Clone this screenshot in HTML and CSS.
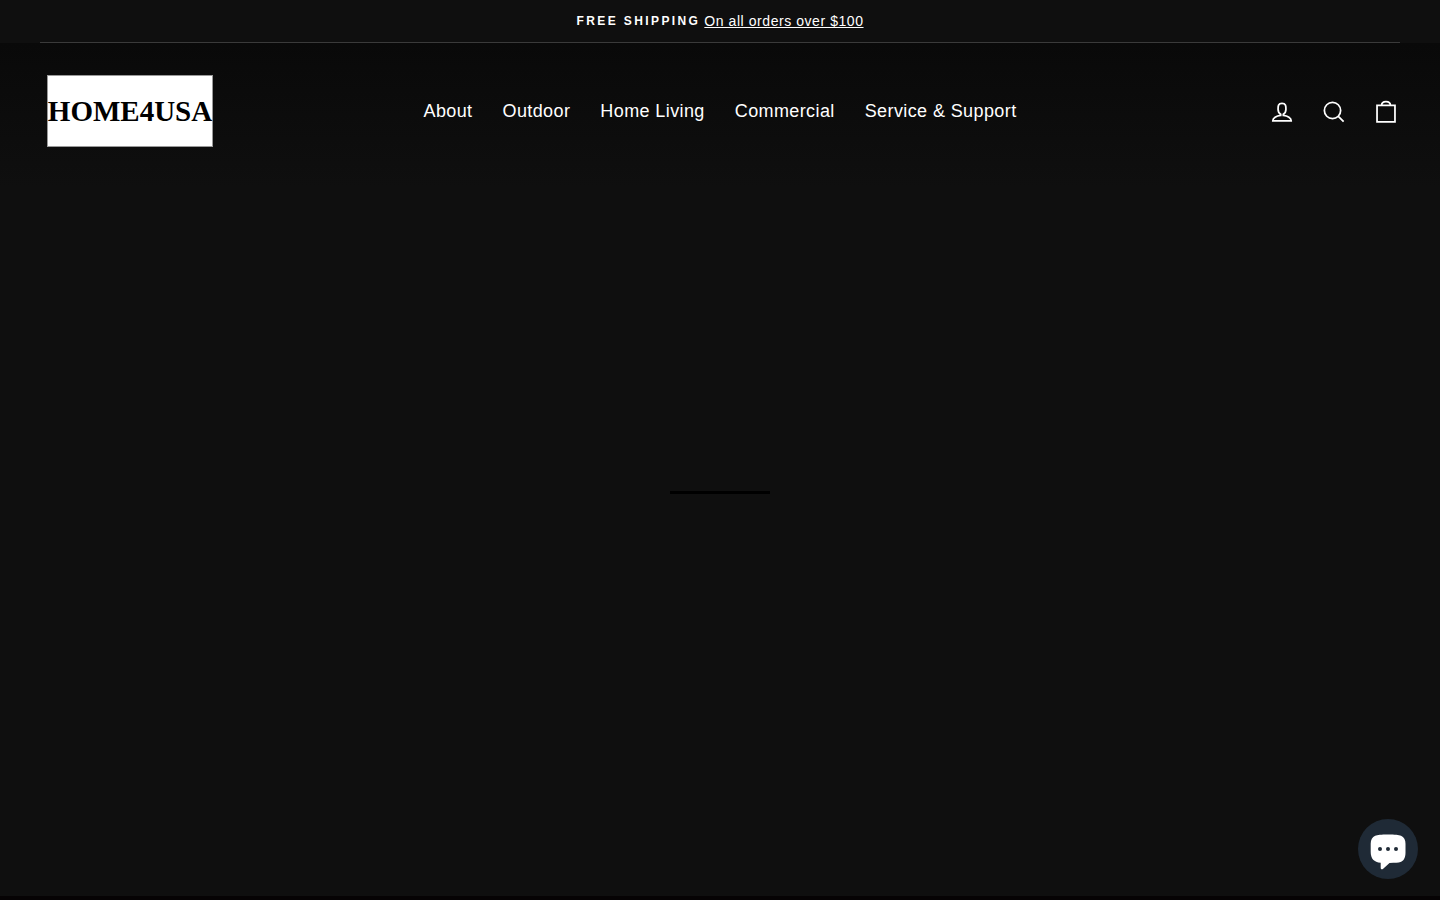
FILE: index.html
```
<!DOCTYPE html>
<html lang="en">

<head>
    <meta charset="UTF-8">
    <meta name="viewport" content="width=device-width, initial-scale=1.0">
    <title>HOME4USA</title>
    <link rel="stylesheet" href="styles.css">
</head>

<body>
    <div class="announcement">
        <strong>FREE SHIPPING</strong>
        <a href="#">On all orders over $100</a>
    </div>

    <header class="site-header">
        <div class="header-inner">
            <div class="header-side">
                <a href="#" class="logo">HOME4USA</a>
            </div>
            <nav class="site-nav">
                <a href="#">About</a>
                <a href="#">Outdoor</a>
                <a href="#">Home Living</a>
                <a href="#">Commercial</a>
                <a href="#">Service &amp; Support</a>
            </nav>
            <div class="header-side header-icons">
                <a href="#" aria-label="Log in">
                    <svg viewBox="0 0 64 64"><path d="M35 39.84v-2.53c3.3-1.91 6-6.66 6-11.42 0-7.63 0-13.82-9-13.82s-9 6.19-9 13.82c0 4.76 2.7 9.51 6 11.42v2.53c-10.18.85-18 6-18 12.16h42c0-6.19-7.82-11.31-18-12.16z"/></svg>
                </a>
                <a href="#" aria-label="Search">
                    <svg viewBox="0 0 64 64"><path d="M47.16 28.58A18.58 18.58 0 1 1 28.58 10a18.58 18.58 0 0 1 18.58 18.58zM54 54L41.94 42"/></svg>
                </a>
                <a href="#" aria-label="Cart">
                    <svg viewBox="0 0 64 64"><path d="M11.500 17h41v37.500h-41z"/><path d="M22 17c0-5 4-8.500 10-8.500S42 12 42 17"/></svg>
                </a>
            </div>
        </div>
    </header>

    <main class="hero">
        <div class="loading-bar"></div>
    </main>

    <button class="chat-button" aria-label="Chat">
        <svg viewBox="0 0 60 60">
            <path fill="#fff" d="M30 15.500c-7 0-10.500.3-12.800 1.200-3 1.200-4.500 4-4.500 8V33c0 6.500 3.300 10.300 10 10.700v5.300c0 1.200 1.300 1.700 2.200.9l6.600-5.900c5.500 0 9-.2 11-.9 3.300-1.200 5-4.600 5-9.400v-9c0-4-1.500-6.800-4.500-8-2.300-.9-6-1.200-13-1.200z"/>
            <g fill="#1f2a36">
                <circle cx="22" cy="30" r="2"/>
                <circle cx="30" cy="30" r="2"/>
                <circle cx="38" cy="30" r="2"/>
            </g>
        </svg>
    </button>
</body>

</html>
```
FILE: styles.css
```
* {
    box-sizing: border-box;
}

body {
    margin: 0;
    min-height: 100vh;
    display: flex;
    flex-direction: column;
    font-family: "Liberation Sans", Arial, sans-serif;
    font-size: 18px;
    letter-spacing: 0.022em;
    color: #fff;
    background-color: #0f0f0f;
    border-bottom: 4px solid #060304;
}

a {
    color: #fff;
}

.announcement {
    display: flex;
    justify-content: center;
    align-items: center;
    gap: 4px;
    margin: 0 40px;
    padding: 10px 0;
    border-bottom: 1px solid #3a3a3a;
    font-size: 14px;
    line-height: 22px;
    letter-spacing: 0.04em;
}

.announcement strong {
    font-size: 12px;
    letter-spacing: 0.2em;
}

.announcement a {
    text-underline-offset: 1px;
}

.site-header {
    padding: 32px 40px 40px;
    background: linear-gradient(#090909, #0f0f0f);
}

.header-inner {
    display: flex;
    align-items: center;
}

.header-side {
    flex: 1;
}

.logo {
    display: inline-flex;
    align-items: center;
    justify-content: center;
    width: 166px;
    height: 72px;
    margin-left: 7px;
    vertical-align: top;
    background-color: #fff;
    border: 1px solid #999;
    color: #000;
    font-family: "Liberation Serif", "Times New Roman", serif;
    font-size: 29px;
    font-weight: bold;
    letter-spacing: normal;
    text-decoration: none;
}

.site-nav {
    display: flex;
    gap: 30px;
    white-space: nowrap;
}

.site-nav a {
    text-decoration: none;
}

.header-icons {
    display: flex;
    justify-content: flex-end;
    gap: 24px;
    padding-top: 2px;
}

.header-icons svg {
    display: block;
    width: 28px;
    height: 28px;
    fill: none;
    stroke: #fff;
    stroke-width: 4;
}

.hero {
    flex: 1;
    display: flex;
    align-items: center;
    justify-content: center;
    padding-bottom: 98px;
}

.loading-bar {
    width: 100px;
    height: 3px;
    background-color: #000;
}

.chat-button {
    position: fixed;
    right: 22px;
    bottom: 21px;
    width: 60px;
    height: 60px;
    padding: 0;
    border: none;
    border-radius: 50%;
    background-color: #1f2a36;
    cursor: pointer;
}

.chat-button svg {
    display: block;
}
```
